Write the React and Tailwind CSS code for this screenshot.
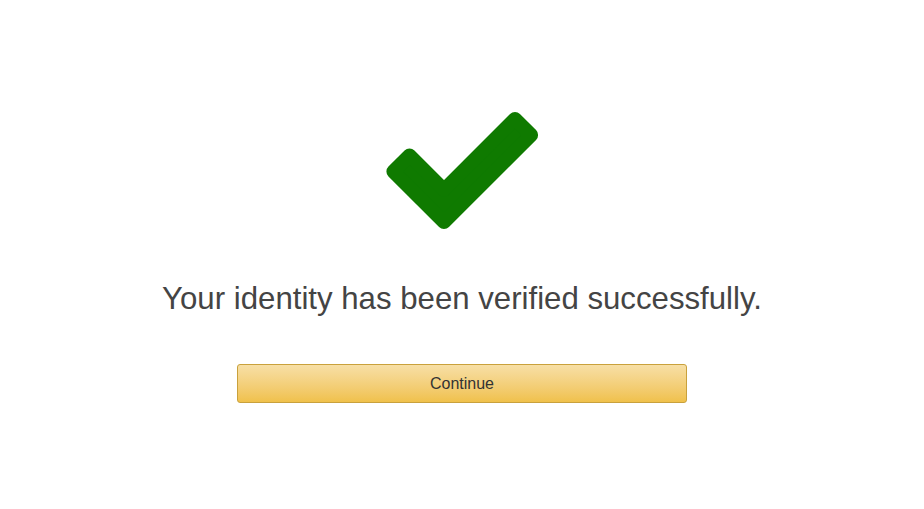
export default function App() {
  return (
    <div className="w-[924px] h-[509px] bg-white flex flex-col items-center" style={{ fontFamily: '"Liberation Sans", Arial, sans-serif' }}>
      <svg className="mt-[105px] block" width="165" height="130" viewBox="380 105 165 130">
        <polygon
          points="393.4,171.5 409.5,155.4 444,189.9 515,118.9 531.1,135 444,222.1"
          fill="#0f7a00"
          stroke="#0f7a00"
          strokeWidth="14"
          strokeLinejoin="round"
        />
      </svg>
      <p className="mt-[46px] text-[31.2px] leading-[36px] text-[#444]">Your identity has been verified successfully.</p>
      <button className="mt-[47px] w-[450px] h-[39px] rounded-[3px] border border-[#c9a13c] bg-gradient-to-b from-[#f7dfa5] to-[#f0c14b] text-[16px] text-[#333] flex items-center justify-center">
        Continue
      </button>
    </div>
  );
}
